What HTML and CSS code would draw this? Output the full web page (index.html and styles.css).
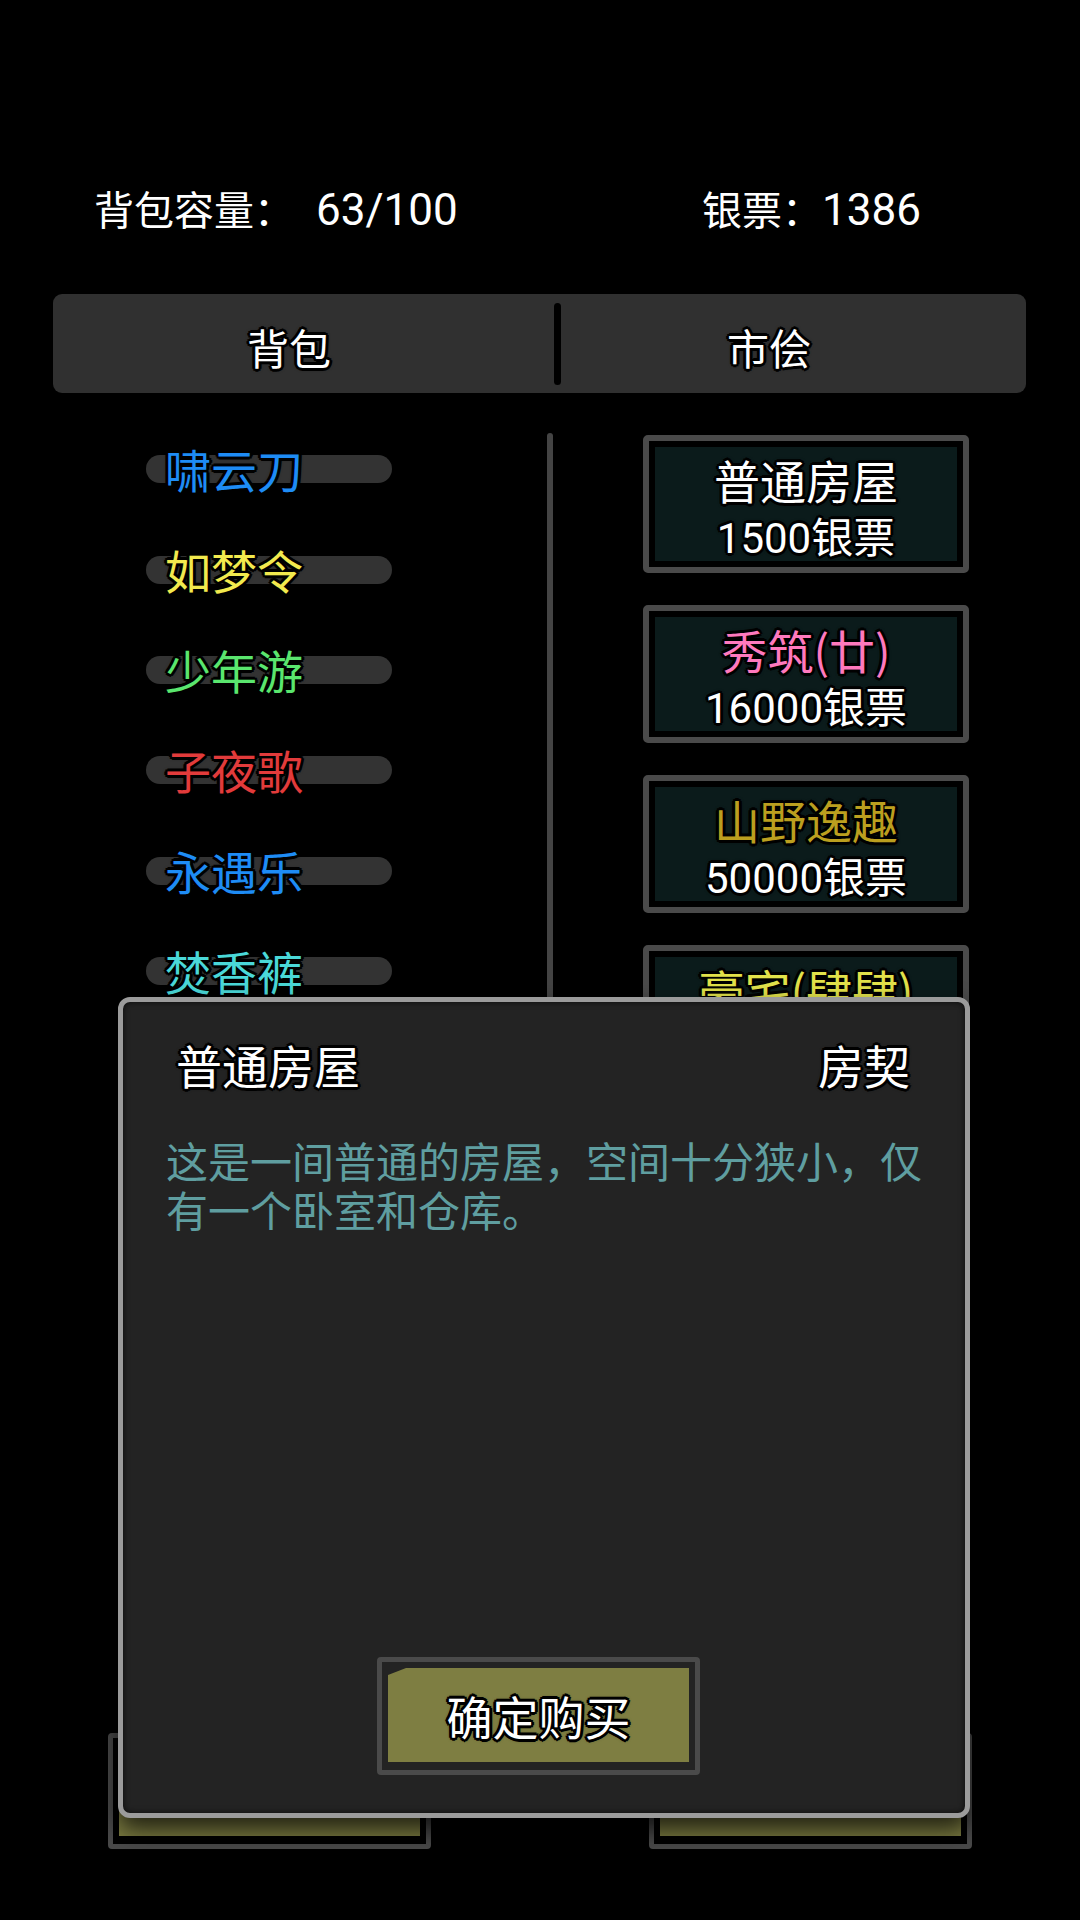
FILE: index.html
```html
<!DOCTYPE html>
<html lang="zh-CN">
<head>
<meta charset="utf-8">
<title>背包</title>
<link rel="stylesheet" href="styles.css">
</head>
<body>
<div class="page">
  <header class="stats">
    <div class="stat">背包容量：<span class="num num-gap">63/100</span></div>
    <div class="stat">银票：<span class="num">1386</span></div>
  </header>

  <nav class="tabs">
    <div class="tab tab-left outline">背包</div>
    <div class="tab-spacer"></div>
    <div class="tab-divider"></div>
    <div class="tab tab-right outline">市侩</div>
  </nav>

  <main class="main">
    <section class="bag-list">
      <div class="bag-item"><div class="pill"></div><span class="item-name outline c-blue">啸云刀</span></div>
      <div class="bag-item"><div class="pill"></div><span class="item-name outline c-yellow">如梦令</span></div>
      <div class="bag-item"><div class="pill"></div><span class="item-name outline c-green">少年游</span></div>
      <div class="bag-item"><div class="pill"></div><span class="item-name outline c-red">子夜歌</span></div>
      <div class="bag-item"><div class="pill"></div><span class="item-name outline c-blue">永遇乐</span></div>
      <div class="bag-item"><div class="pill"></div><span class="item-name outline c-cyan">焚香裤</span></div>
    </section>

    <div class="scrollbar"></div>

    <section class="shop-list">
      <div class="card"><div class="card-inner"><div class="card-name outline c-white">普通房屋</div><div class="card-price outline">1500银票</div></div></div>
      <div class="card"><div class="card-inner"><div class="card-name outline c-pink">秀筑(廿)</div><div class="card-price outline">16000银票</div></div></div>
      <div class="card"><div class="card-inner"><div class="card-name outline c-gold">山野逸趣</div><div class="card-price outline">50000银票</div></div></div>
      <div class="card"><div class="card-inner"><div class="card-name outline c-lemon">豪宅(肆肆)</div></div></div>
    </section>
  </main>

  <footer class="actions">
    <div class="action-btn"><div class="action-fill"></div></div>
    <div class="action-btn"><div class="action-fill"></div></div>
  </footer>

  <div class="modal">
    <div class="modal-head">
      <div class="modal-title outline">普通房屋</div>
      <div class="modal-type outline">房契</div>
    </div>
    <p class="modal-desc">这是一间普通的房屋，空间十分狭小，仅有一个卧室和仓库。</p>
    <div class="buy-btn">
      <div class="buy-fill outline">确定购买</div>
    </div>
  </div>
</div>
</body>
</html>
```

FILE: styles.css
```css
html, body {
  margin: 0;
  padding: 0;
  background: #000;
}

body {
  font-family: "Noto Sans CJK SC", "Noto Sans", sans-serif;
  color: #fff;
}

.page {
  position: relative;
  width: 1080px;
  height: 1920px;
  overflow: hidden;
  display: flex;
  flex-direction: column;
}

.outline {
  text-shadow:
    -2px -2px 0 #000, 2px -2px 0 #000, -2px 2px 0 #000, 2px 2px 0 #000,
    0 -3px 0 #000, 0 3px 0 #000, -3px 0 0 #000, 3px 0 0 #000,
    0 0 4px #000;
}

/* header stats */
.stats {
  display: grid;
  grid-template-columns: 608px 1fr;
  padding: 184px 0 0 94px;
  font-size: 40px;
  line-height: 48px;
  color: #fff;
}

.stat {
  height: 48px;
  overflow: visible;
}

.num {
  font-family: Roboto, "Noto Sans CJK SC", sans-serif;
  font-size: 44px;
}

.num-gap {
  margin-left: 22px;
}

/* tabs */
.tabs {
  margin: 62px 54px 0 53px;
  height: 99px;
  background: #303030;
  border-radius: 9px;
  display: grid;
  grid-template-columns: 472px 29px 8px 1fr;
  align-items: center;
  padding-right: 50px;
}

.tab {
  text-align: center;
  font-size: 42px;
  line-height: 50px;
  padding-top: 6px;
  color: #fff;
}

.tab-divider {
  width: 7px;
  height: 82px;
  background: #000;
  border-radius: 4px;
}

/* main area */
.main {
  flex: 1;
  min-height: 0;
  display: flex;
  overflow: hidden;
}

.bag-list {
  width: 547px;
  flex: none;
  padding: 26px 0 0 146px;
  box-sizing: border-box;
}

.bag-item {
  height: 100.4px;
  display: grid;
  align-items: center;
}

.pill,
.item-name {
  grid-area: 1 / 1;
}

.pill {
  width: 246px;
  height: 28px;
  border-radius: 14px;
  background: #333;
}

.item-name {
  margin-left: 19px;
  font-size: 46px;
  line-height: 54px;
  padding-bottom: 2px;
}

.c-blue { color: #1e8cf5; }
.c-yellow { color: #f2ea4e; }
.c-green { color: #5ae66e; }
.c-red { color: #e23b3b; }
.c-cyan { color: #4ad8d8; }
.c-white { color: #fff; }
.c-pink { color: #ff79bd; }
.c-gold { color: #bb9f1f; }
.c-lemon { color: #e2e24a; }

.scrollbar {
  flex: none;
  width: 6px;
  margin-top: 40px;
  background: #444;
  border-radius: 3px;
}

.shop-list {
  flex: none;
  padding: 42px 0 0 90px;
  display: flex;
  flex-direction: column;
  gap: 32px;
}

.card {
  width: 326px;
  height: 138px;
  box-sizing: border-box;
  border: 6px solid #4a4a4a;
  border-radius: 5px;
  padding: 6px;
  background: #000;
  flex: none;
}

.card-inner {
  height: 100%;
  background: #0b1b1b;
  text-align: center;
  padding-top: 5px;
  box-sizing: border-box;
}

.card-name {
  font-size: 46px;
  line-height: 54px;
}

.card-price {
  margin-top: 9px;
  font-family: Roboto, "Noto Sans CJK SC", sans-serif;
  font-size: 42px;
  line-height: 48px;
  color: #fff;
}

/* footer buttons (under the modal) */
.actions {
  flex: none;
  display: grid;
  grid-template-columns: 323px 323px;
  column-gap: 218px;
  padding-left: 108px;
  margin-bottom: 71px;
}

.action-btn {
  height: 116px;
  box-sizing: border-box;
  border: 5px solid #4a4a4a;
  border-radius: 4px;
  padding: 6px 6px 8px;
  background: #000;
}

.action-fill {
  height: 100%;
  background: #7e7e42;
}

/* modal */
.modal {
  position: absolute;
  left: 118px;
  top: 997px;
  width: 852px;
  height: 821px;
  box-sizing: border-box;
  border: 5px solid #9b9b9b;
  border-radius: 12px;
  background: #232323;
  box-shadow: inset 0 0 6px rgba(0, 0, 0, 0.7), 0 12px 24px rgba(0, 0, 0, 0.75);
  display: flex;
  flex-direction: column;
}

.modal-head {
  display: flex;
  justify-content: space-between;
  padding: 35px 55px 0 53px;
  font-size: 46px;
  line-height: 54px;
  color: #fff;
}

.modal-desc {
  margin: 44px 0 0 0;
  padding: 0 40px 0 43px;
  font-size: 42px;
  line-height: 49px;
  color: #5f9ea0;
}

.buy-btn {
  margin: auto 0 38px 254px;
  width: 323px;
  height: 118px;
  box-sizing: border-box;
  border: 5px solid #4a4a4a;
  border-radius: 4px;
  padding: 6px 6px 8px;
  background: #232323;
}

.buy-fill {
  height: 100%;
  background: #7e7e42;
  clip-path: polygon(0 7px, 18px 0, 100% 0, 100% 100%, 0 100%);
  display: flex;
  align-items: center;
  justify-content: center;
  font-size: 46px;
  line-height: 54px;
  color: #fff;
}
```
